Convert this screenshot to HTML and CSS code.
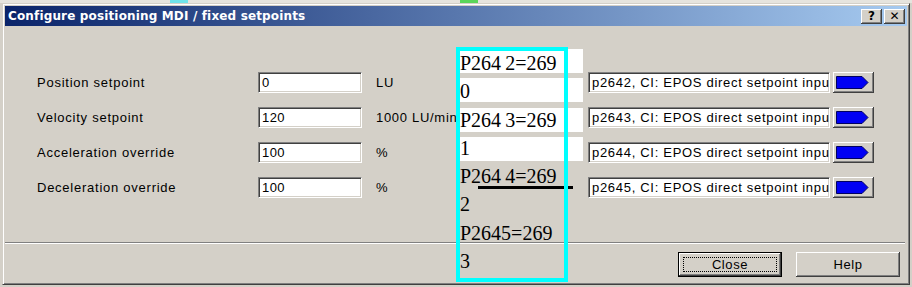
FILE: index.html
```html
<!DOCTYPE html>
<html lang="en">
<head>
  <meta charset="UTF-8" />
  <title>Configure positioning MDI / fixed setpoints</title>
  <link rel="stylesheet" href="styles.css">
</head>
<body>

  <div class="strip"></div>

  <div class="dialog">
    <div class="titlebar">
      <span class="title">Configure positioning MDI / fixed setpoints</span>
      <div class="title-btns">
        <span class="tbtn">?</span>
        <span class="tbtn">✕</span>
      </div>
    </div>

    <div class="form">
      <span class="label">Position setpoint</span>
      <div class="field">0</div>
      <span class="unit">LU</span>
      <div class="combo">p2642, CI: EPOS direct setpoint input</div>
      <button class="arrow"><svg width="33" height="13" viewBox="0 0 33 13"><polygon points="0.5,0.5 26,0.5 32,6.5 26,12.5 0.5,12.5" fill="#0000f4" stroke="#000060"/></svg></button>

      <span class="label">Velocity setpoint</span>
      <div class="field">120</div>
      <span class="unit">1000 LU/min</span>
      <div class="combo">p2643, CI: EPOS direct setpoint input</div>
      <button class="arrow"><svg width="33" height="13" viewBox="0 0 33 13"><polygon points="0.5,0.5 26,0.5 32,6.5 26,12.5 0.5,12.5" fill="#0000f4" stroke="#000060"/></svg></button>

      <span class="label">Acceleration override</span>
      <div class="field">100</div>
      <span class="unit">%</span>
      <div class="combo">p2644, CI: EPOS direct setpoint input</div>
      <button class="arrow"><svg width="33" height="13" viewBox="0 0 33 13"><polygon points="0.5,0.5 26,0.5 32,6.5 26,12.5 0.5,12.5" fill="#0000f4" stroke="#000060"/></svg></button>

      <span class="label">Deceleration override</span>
      <div class="field">100</div>
      <span class="unit">%</span>
      <div class="combo">p2645, CI: EPOS direct setpoint input</div>
      <button class="arrow"><svg width="33" height="13" viewBox="0 0 33 13"><polygon points="0.5,0.5 26,0.5 32,6.5 26,12.5 0.5,12.5" fill="#0000f4" stroke="#000060"/></svg></button>
    </div>

    <div class="sep"></div>

    <div class="actions">
      <button class="btn default"><span class="focus">Close</span></button>
      <button class="btn">Help</button>
    </div>
  </div>

  <!-- annotation drawn over the dialog -->
  <div class="patches">
    <div></div><div></div><div></div><div></div>
  </div>
  <div class="strike"></div>
  <div class="note">
    <div class="note-text">
      <div>P264&#8201;2=269</div>
      <div>0</div>
      <div>P264&#8201;3=269</div>
      <div>1</div>
      <div>P264&#8201;4=269</div>
      <div>2</div>
      <div>P2645=269</div>
      <div>3</div>
    </div>
  </div>

</body>
</html>
```

FILE: styles.css
```css
body {
  margin: 0;
  width: 912px;
  height: 287px;
  overflow: hidden;
  background-color: #d4d0c8;
  font-family: "Liberation Sans", Arial, sans-serif;
  font-size: 13px;
  color: #000;
  position: relative;
}

.strip {
  height: 3px;
  background: linear-gradient(to right,
    #e6e4de 0, #e6e4de 170px, #6fe3ea 170px, #6fe3ea 188px,
    #e6e4de 188px, #e6e4de 460px, #5ad65a 460px, #5ad65a 478px,
    #e6e4de 478px);
}

.dialog {
  margin-left: 2px;
  width: 902px;
  height: 276px;
  padding: 2px;
  border: 1px solid;
  border-color: #d4d0c8 #404040 #404040 #d4d0c8;
  box-shadow: inset 1px 1px #fff, inset -1px -1px #808080;
  display: flex;
  flex-direction: column;
}

.titlebar {
  height: 20px;
  background: linear-gradient(to right, #0a246a, #a6caf0);
  display: flex;
  align-items: center;
  justify-content: space-between;
  padding: 0 2px 0 3px;
}

.title {
  color: #fff;
  font-family: "DejaVu Sans", sans-serif;
  font-weight: bold;
  font-size: 12px;
  letter-spacing: 0.15px;
}

.title-btns {
  display: flex;
  gap: 2px;
}

.tbtn {
  width: 21px;
  height: 15px;
  background: #d4d0c8;
  box-shadow: inset -1px -1px #404040, inset 1px 1px #fff, inset -2px -2px #808080;
  font-family: "DejaVu Sans", sans-serif;
  font-weight: bold;
  font-size: 12px;
  line-height: 15px;
  text-align: center;
}

.form {
  display: grid;
  grid-template-columns: 221px 104px 226px 242px 44px;
  grid-auto-rows: 21px;
  row-gap: 14px;
  align-items: center;
  padding: 46px 0 0 32px;
}

.label {
  letter-spacing: 0.75px;
}

.field,
.combo {
  height: 21px;
  box-sizing: border-box;
  background: #fff;
  border-top: 1px solid #808080;
  border-left: 1px solid #808080;
  border-right: 1px solid #fff;
  border-bottom: 1px solid #fff;
  box-shadow: inset 1px 1px #404040, inset -1px -1px #d4d0c8;
  padding: 2px 3px 0;
  line-height: 16px;
  white-space: nowrap;
  overflow: hidden;
}

.field {
  letter-spacing: 0.4px;
}

.unit {
  padding-left: 14px;
  letter-spacing: 0.7px;
  white-space: nowrap;
}

.combo {
  letter-spacing: 0.7px;
}

.arrow {
  justify-self: end;
  width: 41px;
  height: 21px;
  padding: 0;
  border: none;
  background: #d4d0c8;
  box-shadow: inset -1px -1px #404040, inset 1px 1px #fff, inset -2px -2px #808080;
  display: flex;
  align-items: center;
  justify-content: center;
}

.arrow svg {
  margin-right: 3px;
}

.sep {
  margin: 44px 2px 0 0;
  height: 1px;
  background: #808080;
  border-bottom: 1px solid #fff;
}

.actions {
  display: flex;
  justify-content: flex-end;
  gap: 14px;
  padding: 8px 7px 0 0;
}

.btn {
  width: 104px;
  height: 25px;
  padding: 0;
  border: none;
  background: #d4d0c8;
  font-family: "Liberation Sans", Arial, sans-serif;
  font-size: 13px;
  letter-spacing: 0.6px;
  color: #000;
  box-shadow: inset -1px -1px #404040, inset 1px 1px #fff, inset -2px -2px #808080;
}

.btn.default {
  border: 1px solid #000;
  display: flex;
  padding: 4px;
  box-sizing: border-box;
}

.focus {
  flex: 1;
  border: 1px dotted #000;
  display: flex;
  align-items: center;
  justify-content: center;
}

/* annotation layer */
.patches {
  position: absolute;
  left: 460px;
  top: 49px;
  width: 123px;
}

.patches div {
  height: 24px;
  margin-bottom: 5.3px;
  background: #fff;
}

.strike {
  position: absolute;
  left: 478px;
  top: 186px;
  width: 95px;
  height: 3px;
  background: #000;
}

.note {
  position: absolute;
  left: 456px;
  top: 47px;
  width: 104px;
  height: 227px;
  border: 4px solid #00ffff;
}

.note-text {
  margin-top: -2px;
  font-family: "Liberation Serif", "Times New Roman", serif;
  font-size: 20px;
  line-height: 28.3px;
  white-space: nowrap;
}
```
